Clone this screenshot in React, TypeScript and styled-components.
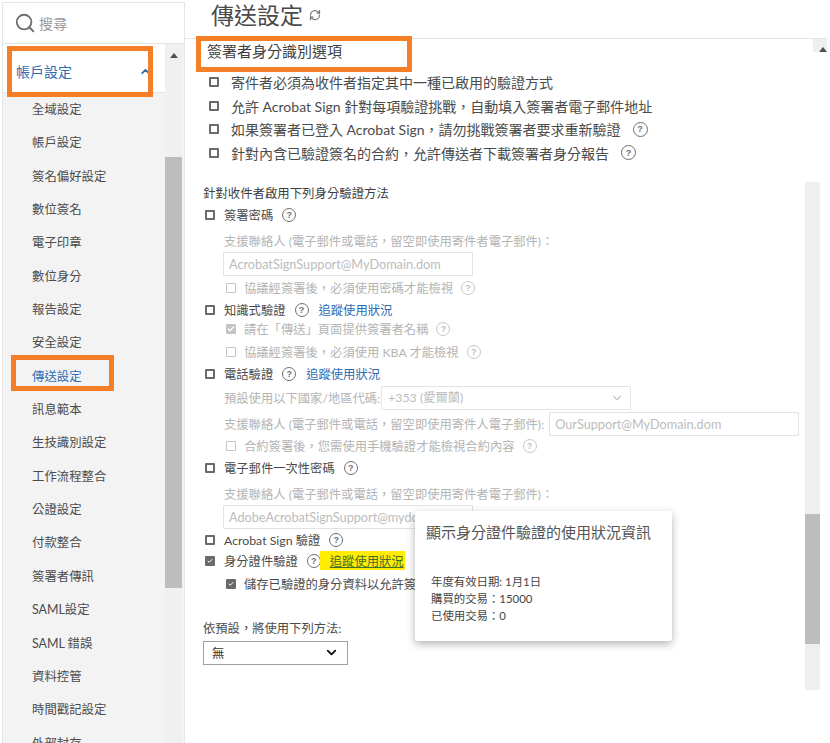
import React from 'react';
import styled, { createGlobalStyle } from 'styled-components';
import { Search, ChevronUp, ChevronDown, RefreshCw, Check } from 'lucide-react';

const ORANGE = '#f57f26';
const TEXT = '#4b4b4b';
const MUTED = '#b4b4b4';
const LINK = '#2f6bb3';

const GlobalStyle = createGlobalStyle`
  html, body {
    margin: 0;
    padding: 0;
    background: #fff;
  }
  body {
    font-family: Lato, "Noto Sans CJK TC", sans-serif;
    color: ${TEXT};
  }
`;

const Page = styled.div`
  display: flex;
  width: 830px;
  height: 743px;
  overflow: hidden;
`;

const Sidebar = styled.aside`
  flex: 0 0 183px;
  margin-left: 2px;
  margin-top: 2px;
  box-sizing: border-box;
  border: 1px solid #e6e6e6;
  border-bottom: none;
  display: flex;
  flex-direction: column;
  background: #f3f3f3;
`;

const SearchBox = styled.div`
  flex: 0 0 40px;
  display: flex;
  align-items: center;
  gap: 3px;
  padding-left: 11px;
  background: #fff;
  border-bottom: 1px solid #e6e6e6;
  font-size: 14px;
  color: #9b9b9b;
`;

const SideBody = styled.div`
  flex: 1;
  display: flex;
  min-height: 0;
`;

const NavColumn = styled.nav`
  flex: 0 0 162px;
  overflow: hidden;
`;

const NavHeader = styled.div`
  position: relative;
  height: 49px;
  display: flex;
  align-items: center;
  justify-content: space-between;
  padding: 6px 13px 0 13px;
  box-sizing: border-box;
  background: #fff;
  border-bottom: 1px solid #e4e4e4;
  font-size: 14px;
  color: ${LINK};

  &::after {
    content: '';
    position: absolute;
    left: 4px;
    top: 2px;
    width: 146px;
    height: 51px;
    box-sizing: border-box;
    border: 5px solid ${ORANGE};
  }
`;

const NavItem = styled.div<{ $active?: boolean }>`
  position: relative;
  height: 33.35px;
  line-height: 33.35px;
  padding-left: 29px;
  font-size: 12.4px;
  white-space: nowrap;
  color: ${props => (props.$active ? LINK : TEXT)};

  ${props =>
    props.$active &&
    `
    &::after {
      content: '';
      position: absolute;
      left: 8px;
      top: -5px;
      width: 103px;
      height: 36px;
      box-sizing: border-box;
      border: 5px solid ${ORANGE};
    }
  `}
`;

const SideScroll = styled.div`
  flex: 0 0 17px;
  display: flex;
  flex-direction: column;
  align-items: center;
  background: #f0f0f0;
`;

const ArrowUp = styled.span`
  margin-top: 9px;
  width: 0;
  height: 0;
  border-left: 4.5px solid transparent;
  border-right: 4.5px solid transparent;
  border-bottom: 5px solid #505050;
`;

const SideThumb = styled.div`
  align-self: stretch;
  margin-top: 99px;
  height: 431px;
  background: #bdbdbd;
`;

const Main = styled.main`
  flex: 1;
  min-width: 0;
  display: flex;
  flex-direction: column;
`;

const TitleBar = styled.div`
  height: 38px;
  padding: 0 0 8px 26px;
  box-sizing: border-box;
  display: flex;
  align-items: center;
  gap: 6px;
`;

const Title = styled.h1`
  margin: 0;
  font-size: 23px;
  font-weight: 400;
  line-height: 30px;
  color: #4a4a4a;
`;

const Panel = styled.div`
  position: relative;
  flex: 1;
  display: flex;
  margin-right: 3px;
  border-top: 1px solid #e6e6e6;
`;

const Form = styled.div`
  flex: 0 0 620px;
  min-width: 0;
`;

const SectionHeading = styled.h2`
  width: 216px;
  height: 36px;
  margin: -3px 0 -2px 11px;
  padding-left: 6px;
  box-sizing: border-box;
  border: 5px solid ${ORANGE};
  background: #fff;
  position: relative;
  font-size: 15px;
  font-weight: 400;
  line-height: 21px;
  color: #3f3f3f;
`;

const Row = styled.div<{ $h?: number; $mt?: number; $pl?: number; $gap?: number; $muted?: boolean; $size?: number }>`
  display: flex;
  align-items: center;
  height: ${props => props.$h ?? 22}px;
  margin-top: ${props => props.$mt ?? 0}px;
  padding-left: ${props => props.$pl ?? 20}px;
  gap: ${props => props.$gap ?? 9}px;
  font-size: ${props => props.$size ?? 12.3}px;
  white-space: nowrap;
  color: ${props => (props.$muted ? MUTED : TEXT)};
`;

const GroupTitle = styled.div`
  height: 20px;
  margin-top: 19px;
  padding-left: 18px;
  font-size: 12.4px;
  line-height: 20px;
  color: #3d3d3d;
`;

const Box = styled.span<{ $checked?: boolean; $muted?: boolean }>`
  flex: 0 0 10px;
  width: 10px;
  height: 10px;
  box-sizing: border-box;
  display: inline-flex;
  align-items: center;
  justify-content: center;
  border: ${props => (props.$muted ? '1.5px' : '2px')} solid ${props => (props.$muted ? '#c4c4c4' : '#6a6a6a')};
  border-radius: 1px;
  background: ${props => (props.$checked ? (props.$muted ? '#c4c4c4' : '#6a6a6a') : '#fff')};
  color: #fff;
`;

const Help = styled.span<{ $muted?: boolean; $big?: boolean }>`
  flex: 0 0 auto;
  width: ${props => (props.$big ? 15 : 14)}px;
  height: ${props => (props.$big ? 15 : 14)}px;
  box-sizing: border-box;
  display: inline-flex;
  align-items: center;
  justify-content: center;
  border: 1.5px solid ${props => (props.$muted ? '#c8c8c8' : '#6f6f6f')};
  border-radius: 50%;
  font-size: 9px;
  font-weight: 700;
  font-family: "Liberation Sans", sans-serif;
  color: ${props => (props.$muted ? '#c0c0c0' : '#6f6f6f')};
`;

const TrackLink = styled.a`
  margin-left: 1px;
  color: ${LINK};
  text-decoration: none;
`;

const MarkedLink = styled.a`
  display: inline-flex;
  align-items: center;
  height: 19px;
  margin-left: -10px;
  padding: 0 1px 0 10px;
  background: #ffec00;
  color: #3f6f2a;
  text-decoration: underline;
`;

const GhostInput = styled.div<{ $w?: number; $ml?: number }>`
  width: ${props => props.$w ?? 250}px;
  height: 24px;
  margin-left: ${props => props.$ml ?? 38}px;
  padding-left: 5px;
  box-sizing: border-box;
  border: 1px solid #e3e3e3;
  border-radius: 1px;
  font-size: 12.7px;
  line-height: 22px;
  white-space: nowrap;
  overflow: hidden;
  color: #bcbcbc;
  background: #fff;
`;

const GhostSelect = styled(GhostInput)`
  display: flex;
  align-items: center;
  justify-content: space-between;
  padding: 0 6px;
  font-size: 12.3px;
`;

const DefaultLabel = styled.div`
  height: 20px;
  margin-top: 25px;
  padding-left: 18px;
  font-size: 12.3px;
  line-height: 20px;
`;

const MethodSelect = styled.div`
  width: 145px;
  height: 24px;
  margin: 2px 0 0 18px;
  padding: 0 8px;
  box-sizing: border-box;
  border: 1px solid #9f9f9f;
  display: flex;
  align-items: center;
  justify-content: space-between;
  font-size: 12.3px;
  color: #333;
`;

const Tooltip = styled.div`
  position: absolute;
  left: 230px;
  top: 472px;
  width: 257px;
  height: 130px;
  padding: 10px 11px;
  box-sizing: border-box;
  background: #fff;
  border-radius: 3px;
  box-shadow: 0 3px 8px rgba(0, 0, 0, 0.3);
`;

const TooltipTitle = styled.div`
  font-size: 15px;
  line-height: 22px;
  color: #555;
  white-space: nowrap;
`;

const TooltipLines = styled.div`
  margin: 30px 0 0 5px;
  font-size: 11.4px;
  line-height: 17px;
  color: #444;
`;

const Track = styled.div`
  flex: 0 0 22px;
  display: flex;
  flex-direction: column;
`;

const TrackCap = styled.div`
  flex: 0 0 13px;
  margin-left: 8px;
  display: flex;
  align-items: flex-end;
  justify-content: flex-end;
  background: #efefef;
`;

const CapArrow = styled.span`
  width: 0;
  height: 0;
  border-left: 4.5px solid transparent;
  border-right: 4.5px solid transparent;
  border-bottom: 5px solid #505050;
`;

const TrackBar = styled.div`
  width: 15px;
  height: 508px;
  margin-top: 130px;
  padding-top: 332px;
  box-sizing: border-box;
  background: #efefef;
`;

const TrackThumb = styled.div`
  height: 130px;
  background: #bdbdbd;
`;

const navItems = [
  '全域設定', '帳戶設定', '簽名偏好設定', '數位簽名', '電子印章', '數位身分', '報告設定', '安全設定',
  '傳送設定', '訊息範本', '生技識別設定', '工作流程整合', '公證設定', '付款整合', '簽署者傳訊',
  'SAML設定', 'SAML 錯誤', '資料控管', '時間戳記設定', '外部封存',
];

const topOptions: { text: string; help?: boolean }[] = [
  { text: '寄件者必須為收件者指定其中一種已啟用的驗證方式' },
  { text: '允許 Acrobat Sign 針對每項驗證挑戰，自動填入簽署者電子郵件地址' },
  { text: '如果簽署者已登入 Acrobat Sign，請勿挑戰簽署者要求重新驗證', help: true },
  { text: '針對內含已驗證簽名的合約，允許傳送者下載簽署者身分報告', help: true },
];

const App: React.FC = () => {
  const tick = <Check size={8} strokeWidth={4} />;

  return (
    <Page>
      <GlobalStyle />
      <Sidebar>
        <SearchBox>
          <Search size={22} color="#707070" strokeWidth={2} />
          搜尋
        </SearchBox>
        <SideBody>
          <NavColumn>
            <NavHeader>
              帳戶設定
              <ChevronUp size={13} strokeWidth={3.5} color={LINK} />
            </NavHeader>
            {navItems.map(item => (
              <NavItem key={item} $active={item === '傳送設定'}>
                {item}
              </NavItem>
            ))}
          </NavColumn>
          <SideScroll>
            <ArrowUp />
            <SideThumb />
          </SideScroll>
        </SideBody>
      </Sidebar>

      <Main>
        <TitleBar>
          <Title>傳送設定</Title>
          <RefreshCw size={12} color="#777" strokeWidth={2.5} />
        </TitleBar>
        <Panel>
          <Form>
            <SectionHeading>簽署者身分識別選項</SectionHeading>
            {topOptions.map(option => (
              <Row key={option.text} $h={23.7} $pl={24} $gap={12} $size={14}>
                <Box />
                {option.text}
                {option.help && <Help $big>?</Help>}
              </Row>
            ))}

            <GroupTitle>針對收件者啟用下列身分驗證方法</GroupTitle>
            <Row>
              <Box />
              簽署密碼
              <Help>?</Help>
            </Row>
            <Row $mt={4} $pl={39} $muted>支援聯絡人 (電子郵件或電話，留空即使用寄件者電子郵件)：</Row>
            <GhostInput>AcrobatSignSupport@MyDomain.dom</GhostInput>
            <Row $h={20} $mt={2} $pl={41} $gap={8} $muted>
              <Box $muted />
              協議經簽署後，必須使用密碼才能檢視
              <Help $muted>?</Help>
            </Row>
            <Row $mt={1}>
              <Box />
              知識式驗證
              <Help>?</Help>
              <TrackLink>追蹤使用狀況</TrackLink>
            </Row>
            <Row $h={20} $pl={41} $gap={8} $mt={-2} $muted>
              <Box $muted $checked>{tick}</Box>
              請在「傳送」頁面提供簽署者名稱
              <Help $muted>?</Help>
            </Row>
            <Row $h={20} $pl={41} $gap={8} $mt={3} $muted>
              <Box $muted />
              協議經簽署後，必須使用 KBA 才能檢視
              <Help $muted>?</Help>
            </Row>
            <Row $mt={1}>
              <Box />
              電話驗證
              <Help>?</Help>
              <TrackLink>追蹤使用狀況</TrackLink>
            </Row>
            <Row $h={24} $mt={1} $pl={39} $gap={1} $muted>
              預設使用以下國家/地區代碼:
              <GhostSelect $ml={0}>
                +353 (愛爾蘭)
                <ChevronDown size={14} color="#c4c4c4" />
              </GhostSelect>
            </Row>
            <Row $h={24} $mt={2} $pl={39} $gap={0} $muted>
              支援聯絡人 (電子郵件或電話，留空即使用寄件人電子郵件):
              <GhostInput $ml={5}>OurSupport@MyDomain.dom</GhostInput>
            </Row>
            <Row $h={20} $pl={41} $gap={8} $muted>
              <Box $muted />
              合約簽署後，您需使用手機驗證才能檢視合約內容
              <Help $muted>?</Help>
            </Row>
            <Row $mt={1}>
              <Box />
              電子郵件一次性密碼
              <Help>?</Help>
            </Row>
            <Row $mt={4} $pl={39} $muted>支援聯絡人 (電子郵件或電話，留空即使用寄件者電子郵件)：</Row>
            <GhostInput>AdobeAcrobatSignSupport@mydomain.dom</GhostInput>
            <Row $h={20} $mt={1}>
              <Box />
              Acrobat Sign 驗證
              <Help>?</Help>
            </Row>
            <Row>
              <Box $checked>{tick}</Box>
              身分證件驗證
              <Help>?</Help>
              <MarkedLink>追蹤使用狀況</MarkedLink>
            </Row>
            <Row $h={20} $mt={2} $pl={41} $gap={8}>
              <Box $checked>{tick}</Box>
              儲存已驗證的身分資料以允許簽
            </Row>

            <DefaultLabel>依預設，將使用下列方法:</DefaultLabel>
            <MethodSelect>
              無
              <ChevronDown size={15} color="#111" strokeWidth={3} />
            </MethodSelect>
          </Form>

          <Track>
            <TrackCap>
              <CapArrow />
            </TrackCap>
            <TrackBar>
              <TrackThumb />
            </TrackBar>
          </Track>

          <Tooltip>
            <TooltipTitle>顯示身分證件驗證的使用狀況資訊</TooltipTitle>
            <TooltipLines>
              年度有效日期: 1月1日
              <br />
              購買的交易：15000
              <br />
              已使用交易：0
            </TooltipLines>
          </Tooltip>
        </Panel>
      </Main>
    </Page>
  );
};

export default App;
